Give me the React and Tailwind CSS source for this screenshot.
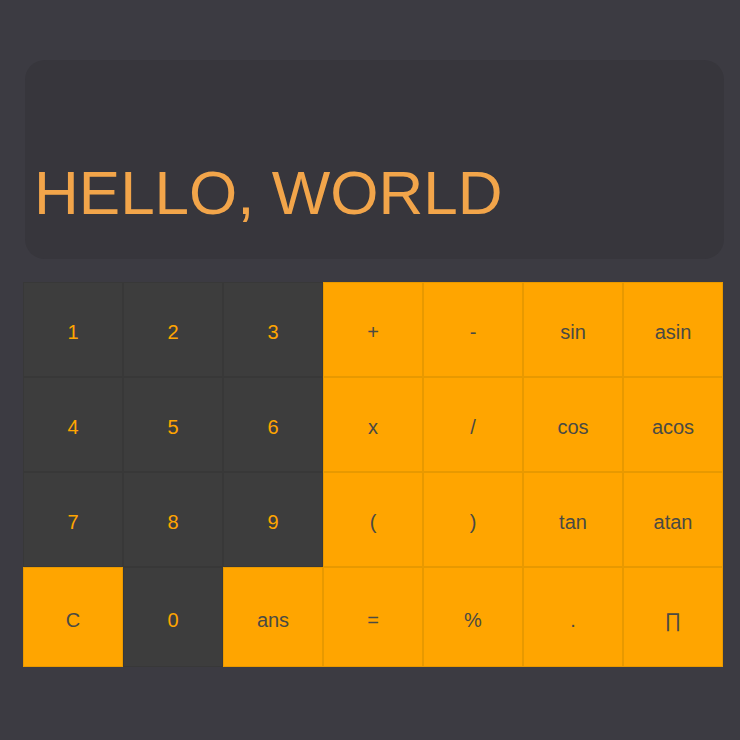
const keys = [
  ['1', 'd'], ['2', 'd'], ['3', 'd'], ['+', 'o'], ['-', 'o'], ['sin', 'o'], ['asin', 'o'],
  ['4', 'd'], ['5', 'd'], ['6', 'd'], ['x', 'o'], ['/', 'o'], ['cos', 'o'], ['acos', 'o'],
  ['7', 'd'], ['8', 'd'], ['9', 'd'], ['(', 'o'], [')', 'o'], ['tan', 'o'], ['atan', 'o'],
  ['C', 'o'], ['0', 'd'], ['ans', 'o'], ['=', 'o'], ['%', 'o'], ['.', 'o'], ['∏', 'o'],
];

export default function App() {
  return (
    <div className="w-[740px] h-[740px] bg-[#3c3b42] pt-[60px] px-[23px] font-['Liberation_Sans',Arial,sans-serif]">
      {/* Display */}
      <div className="ml-[2px] w-[699px] h-[199px] rounded-[20px] bg-[#37363c] flex items-end px-[9px] pb-[35px]">
        <span className="text-[62px] leading-none text-[#f2a54a]">HELLO, WORLD</span>
      </div>

      {/* Keypad */}
      <div className="mt-[23px] grid grid-cols-7 w-[700px] grid-rows-[95px_95px_95px_100px]">
        {keys.map(([label, kind], i) => (
          <button
            key={i}
            className={
              kind === 'o'
                ? 'flex items-center justify-center pt-[5px] border border-[#e89900] bg-[#ffa500] text-[#4a4a44] text-[20px]'
                : 'flex items-center justify-center pt-[5px] border border-[#383838] bg-[#3d3d3d] text-[#ffa500] text-[20px]'
            }
          >
            {label}
          </button>
        ))}
      </div>
    </div>
  );
}
